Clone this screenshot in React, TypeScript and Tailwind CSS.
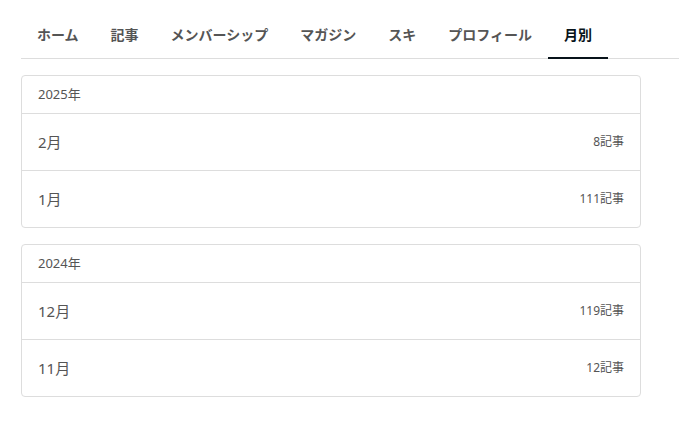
const tabs = ["ホーム", "記事", "メンバーシップ", "マガジン", "スキ", "プロフィール", "月別"];

const archive = [
  {
    year: "2025年",
    months: [
      { label: "2月", count: "8記事" },
      { label: "1月", count: "111記事" },
    ],
  },
  {
    year: "2024年",
    months: [
      { label: "12月", count: "119記事" },
      { label: "11月", count: "12記事" },
    ],
  },
];

export default function App() {
  return (
    <div
      className="min-h-[445px] w-[679px] bg-white pl-[21px]"
      style={{ fontFamily: '"Segoe UI", "Noto Sans", "Noto Sans CJK JP", sans-serif' }}
    >
      <nav className="flex h-[59px] border-b border-[#dddddd]">
        {tabs.map((tab) => {
          const active = tab === "月別";
          return (
            <div
              key={tab}
              className={`relative flex items-center px-4 pt-[11px] text-[14px] font-bold ${
                active ? "text-[#08131a]" : "text-[#555555]"
              }`}
            >
              {tab}
              {active && (
                <span className="absolute bottom-[-1px] left-0 right-0 h-[2px] bg-[#08131a]" />
              )}
            </div>
          );
        })}
      </nav>

      <div className="mt-4 flex w-[620px] flex-col gap-4">
        {archive.map((group) => (
          <section
            key={group.year}
            className="overflow-hidden rounded-[4px] border border-[#dddddd]"
          >
            <div className="flex h-[38px] items-center border-b border-[#dddddd] px-4 text-[13px] text-[#555555]">
              {group.year}
            </div>
            {group.months.map((m, i) => (
              <div
                key={m.label}
                className={`flex h-[56px] items-center justify-between px-4 ${
                  i < group.months.length - 1 ? "h-[57px] border-b border-[#dddddd]" : ""
                }`}
              >
                <span className="text-[15px] text-[#555555]">{m.label}</span>
                <span className="text-[12px] text-[#555555]">{m.count}</span>
              </div>
            ))}
          </section>
        ))}
      </div>
    </div>
  );
}
